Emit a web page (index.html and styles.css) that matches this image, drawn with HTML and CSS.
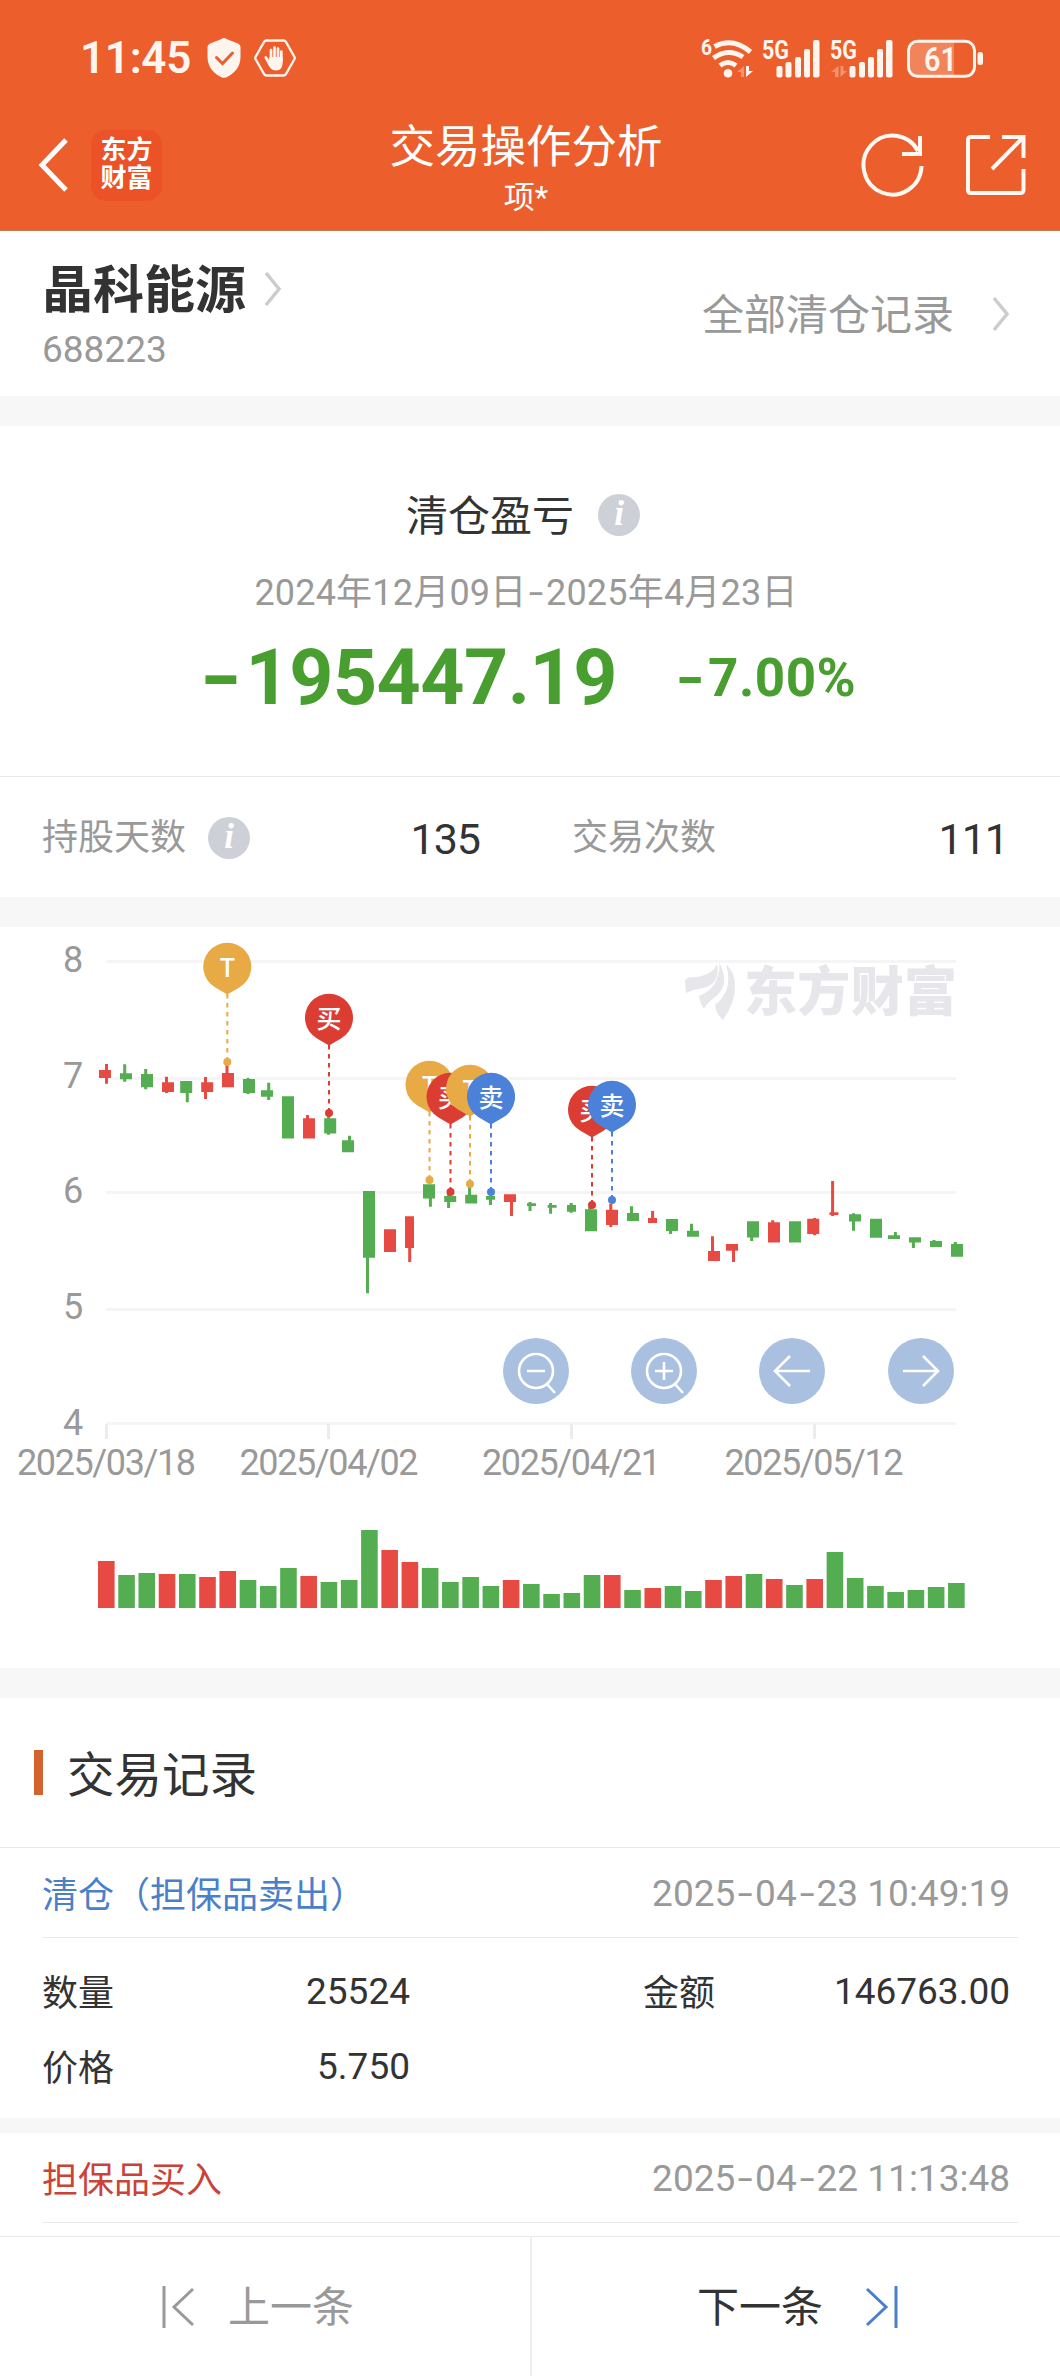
FILE: index.html
```
<!DOCTYPE html>
<html lang="zh-CN">
<head>
    <meta charset="utf-8">
    <title>交易操作分析</title>
    <link rel="stylesheet" href="styles.css">
</head>
<body>

    <header class="header">
        <div class="status-bar">
            <span class="time">11:45</span>
            <svg class="shield" width="34" height="40" viewBox="0 0 34 40">
                <path fill="#fff5ef" d="M17 0 Q18 0 20 1.200 L31 5.500 Q33.500 6.500 33.500 9 V19 C33.500 29 27 36 19 39.500 Q17 40.200 15 39.500 C7 36 .5 29 .5 19 V9 Q.5 6.500 3 5.500 L14 1.200 Q16 0 17 0Z"/>
                <path fill="none" stroke="#ec5e2b" stroke-width="3" stroke-linecap="round" d="M9.500 19.500 L15.500 25.500 L25.500 15"/>
            </svg>
            <svg class="hex" width="42" height="38" viewBox="0 0 42 38">
                <path fill="none" stroke="#fff5ef" stroke-width="2.400" stroke-linejoin="round" d="M12.500 1.500 H29.500 Q31 1.500 32 3 L40.500 18 Q41 19 40.500 20 L32 35 Q31 36.500 29.500 36.500 H12.500 Q11 36.500 10 35 L1.500 20 Q1 19 1.500 18 L10 3 Q11 1.500 12.500 1.500Z"/>
                <path fill="none" stroke="#fff5ef" stroke-width="2.700" stroke-linecap="round" d="M17 22 V11 M20.500 20 V8.500 M24 20 V9.500 M27.300 22 V12.500 M11.800 18.500 L16 26"/>
                <path fill="#fff5ef" d="M15.600 18 H28.700 V23 C28.700 28 26.500 31.500 22 31.500 C17 31.500 15 27.500 13.500 23Z"/>
            </svg>
            <svg class="signals" width="290" height="44" viewBox="696 35 290 44" fill="#fff5ef">
                <text x="701" y="54" font-size="22" font-weight="700" textLength="11" lengthAdjust="spacingAndGlyphs">6</text>
                <g fill="none" stroke="#fff5ef" stroke-width="5">
                    <path d="M714.500 45.500 Q733 36 750.500 51"/>
                    <path d="M713.500 57 Q728 46.500 743 56"/>
                    <path d="M720 64.500 Q728 58.500 736 64.500"/>
                </g>
                <circle cx="728" cy="72.300" r="4.300"/>
                <path d="M746 65 V76 L753 70 H749 V65Z"/>
                <path fill="#f4936e" d="M744 65 V76 H741 V71 H737Z"/>
                <text class="net" x="762" y="57.500" textLength="27" lengthAdjust="spacingAndGlyphs">5G</text>
                <text class="net" x="830" y="57.500" textLength="27" lengthAdjust="spacingAndGlyphs">5G</text>
                <rect x="776.500" y="65" width="6" height="11.500" rx="2"/>
                <rect x="785.500" y="61" width="6" height="15.500" rx="2"/>
                <rect x="795" y="56" width="6" height="20.500" rx="2"/>
                <rect x="804" y="48" width="6" height="28.500" rx="2"/>
                <rect x="813" y="39" width="6.500" height="37.500" rx="2"/>
                <rect x="849.500" y="65" width="6" height="11.500" rx="2"/>
                <rect x="859" y="61" width="6" height="15.500" rx="2"/>
                <rect x="868" y="56" width="6" height="20.500" rx="2"/>
                <rect x="877" y="48" width="6" height="28.500" rx="2"/>
                <rect x="886" y="39" width="6.500" height="37.500" rx="2"/>
                <path fill="#f4936e" d="M838.500 65 V76 H835 V71 H831Z M840.500 65 V76 L847 70 H843.500 V65Z"/>
                <path fill="#f1845a" d="M917 40 H954 V75 H917 Q909 75 909 67 V48 Q909 40 917 40Z"/>
                <rect x="908.500" y="40.300" width="66" height="35" rx="9" fill="none" stroke="#fff5ef" stroke-width="3"/>
                <rect x="977.500" y="51" width="5.500" height="13" rx="2.500"/>
                <text x="924" y="69.500" font-size="33" font-weight="600" textLength="33" lengthAdjust="spacingAndGlyphs">61</text>
            </svg>
        </div>
        <div class="nav-bar">
            <svg class="back" width="32" height="56" viewBox="0 0 32 56">
                <path fill="none" stroke="#fff" stroke-width="5" d="M29 3 L5 28 L29 53"/>
            </svg>
            <div class="app-logo">东方<br>财富</div>
            <div class="nav-title">
                <h1>交易操作分析</h1>
                <p>项*</p>
            </div>
            <svg class="refresh" width="64" height="64" viewBox="0 0 64 64" fill="none" stroke="#fff8f3" stroke-width="4">
                <path d="M60.500 33 A29 29.500 0 1 1 57 18"/>
                <path d="M59 3 V21 H41"/>
            </svg>
            <svg class="share" width="62" height="62" viewBox="0 0 62 62" fill="none" stroke="#fff8f3" stroke-width="4">
                <path d="M25 3 H6 Q3 3 3 6 V56 Q3 59 6 59 H55 Q58.500 59 58.500 56 V35"/>
                <path d="M37 3 H58.500 V24 M58 3.500 L27 35"/>
            </svg>
        </div>
    </header>

    <section class="stock">
        <div>
            <div class="stock-name"><span>晶科能源</span>
                <svg width="18" height="36" viewBox="0 0 18 36"><path fill="none" stroke="#ccc" stroke-width="3.500" d="M2 2 L15 18 L2 34"/></svg>
            </div>
            <div class="stock-code">688223</div>
        </div>
        <a class="all-records"><span>全部清仓记录</span>
            <svg width="18" height="36" viewBox="0 0 18 36"><path fill="none" stroke="#ccc" stroke-width="3.500" d="M2 2 L15 18 L2 34"/></svg>
        </a>
    </section>

    <section class="profit">
        <div class="profit-title"><span>清仓盈亏</span><i class="info">i</i></div>
        <div class="profit-date">2024年12月09日<b>-</b>2025年4月23日</div>
        <div class="profit-value">
            <span class="amount"><b>-</b>195447.19</span>
            <span class="percent"><b>-</b>7.00%</span>
        </div>
    </section>

    <section class="stats">
        <div class="stat"><span>持股天数</span><i class="info">i</i><strong>135</strong></div>
        <div class="stat"><span>交易次数</span><strong>111</strong></div>
    </section>

    <section class="chart">
        <svg id="chart" width="1060" height="741" viewBox="0 927 1060 741">
            <g stroke="#f5f5f5" stroke-width="3">
                <path d="M106 961.500 H956 M106 1078.500 H956 M106 1192.500 H956 M106 1309.500 H956 M106 1423.500 H956"/>
                <path stroke="#ececec" d="M106.500 1424 V1439 M328.500 1424 V1439 M571.500 1424 V1439 M814.500 1424 V1439"/>
            </g>
            <g class="axis">
                <text x="63" y="972">8</text>
                <text x="63" y="1088">7</text>
                <text x="63" y="1203">6</text>
                <text x="63" y="1319">5</text>
                <text x="63" y="1435">4</text>
                <text x="17" y="1474.500" textLength="179">2025/03/18</text>
                <text x="239.500" y="1474.500" textLength="179">2025/04/02</text>
                <text x="482" y="1474.500" textLength="179">2025/04/21</text>
                <text x="724.500" y="1474.500" textLength="179">2025/05/12</text>
            </g>
            <g fill="#e6e6eb">
                <path d="M685 981 Q686 978 689 977.500 Q712 977 717 964 Q721 984 703 988 Q694 989 686 993Z"/>
                <path d="M719.500 963 Q731 985 714 998 Q707 1003 704 1009 Q700 1003 699 996 Q720 988 719.500 963Z"/>
                <path d="M726 964 Q735 972 735 986 Q735 1003 723 1020 Q716 1014 715 1005 Q734 990 726 964Z"/>
                <text class="watermark" x="744" y="1011" textLength="213">东方财富</text>
            </g>
            <g id="candles"></g>
            <g id="pins"></g>
            <g id="volumes"></g>
            <g fill="#a9c0e1">
                <circle cx="536" cy="1371" r="33"/>
                <circle cx="664" cy="1371" r="33"/>
                <circle cx="792" cy="1371" r="33"/>
                <circle cx="921" cy="1371" r="33"/>
            </g>
            <g fill="none" stroke="#fff" stroke-width="2.600">
                <circle cx="536" cy="1371" r="17"/>
                <path d="M527 1371 H545 M547 1384 L555 1393"/>
                <circle cx="664" cy="1371" r="17"/>
                <path d="M655 1371 H673 M664 1362 V1380 M675 1384 L683 1393"/>
                <path d="M810 1371 H775 M790 1356 L775 1371 L790 1386"/>
                <path d="M903 1371 H938 M923 1356 L938 1371 L923 1386"/>
            </g>
        </svg>
    </section>

    <section class="records">
        <h2>交易记录</h2>
        <div class="record">
            <div class="record-head"><span class="sell">清仓（担保品卖出）</span><time>2025<b>-</b>04<b>-</b>23 10:49:19</time></div>
            <div class="record-body">
                <span>数量</span><span class="num">25524</span>
                <span class="second">金额</span><span class="num">146763.00</span>
                <span>价格</span><span class="num">5.750</span>
            </div>
        </div>
        <div class="record">
            <div class="record-head"><span class="buy">担保品买入</span><time>2025<b>-</b>04<b>-</b>22 11:13:48</time></div>
        </div>
    </section>

    <footer class="pager">
        <div class="prev">
            <svg width="34" height="42" viewBox="0 0 34 42"><path fill="none" stroke="#999" stroke-width="3" d="M2 0 V42 M31 3 L12 21 L31 39"/></svg>
            <span>上一条</span>
        </div>
        <div class="next">
            <span>下一条</span>
            <svg width="34" height="42" viewBox="0 0 34 42"><path fill="none" stroke="#4a7fc9" stroke-width="3" d="M31 0 V42 M2 3 L21 21 L2 39"/></svg>
        </div>
    </footer>

    <script>
        const colors = { r: "#e64a42", g: "#54ad51" };

        // color, x, width, top, height, wick x, wick top, wick bottom
        const candles = [
            ["r", 99, 12, 1070, 8, 106.5, 1064, 1083.7],
            ["g", 120, 12, 1073.3, 6, 124.7, 1064.3, 1081.7],
            ["g", 141, 12, 1074, 13.3, 145.7, 1069, 1089.3],
            ["r", 162, 12, 1082.3, 9.7, 166.5, 1076.7, 1093],
            ["g", 180.2, 12, 1081, 12, 187.3, 1081, 1102.3],
            ["r", 201.2, 12, 1082.3, 9.7, 205.5, 1077, 1099],
            ["r", 222, 12, 1073, 14.3, 227, 1064, 1087],
            ["g", 243, 12, 1079, 14, 248, 1078, 1094],
            ["g", 261, 12, 1090.3, 6.5, 268.7, 1082.7, 1100],
            ["g", 282, 12, 1096.3, 42.3, 288, 1096.3, 1138],
            ["r", 303, 12, 1118.3, 20.3, 307.5, 1115, 1138],
            ["g", 324.2, 12, 1118.3, 15.3, 328.6, 1113, 1134.7],
            ["g", 342, 12, 1140.3, 12, 349.5, 1135.7, 1152],
            ["g", 363, 12, 1191, 66.7, 367.5, 1191, 1293.3],
            ["r", 384, 12, 1229.3, 22.7, 390, 1230, 1252],
            ["r", 405, 9, 1216.3, 31.7, 409.7, 1216.3, 1262],
            ["g", 423, 12, 1184.3, 14.3, 430.4, 1184.3, 1206.7],
            ["g", 444.2, 12, 1196, 6, 448.6, 1190, 1208],
            ["g", 465.2, 12, 1194.7, 8.7, 469.6, 1187, 1203],
            ["g", 486, 9, 1196, 3.7, 490.5, 1196, 1205],
            ["r", 504, 12, 1194.3, 7.7, 511.5, 1194.3, 1216],
            ["g", 527, 9, 1203.3, 2.7, 530, 1202, 1211],
            ["g", 547.6, 9, 1205, 2.7, 550.6, 1203, 1213.7],
            ["g", 567, 9, 1205, 6.7, 571.2, 1203, 1212.7],
            ["g", 585, 12, 1209.3, 22, 589.7, 1207, 1231],
            ["r", 606, 12, 1209.7, 15.3, 610.8, 1204, 1227],
            ["g", 627, 12, 1213, 8, 631.5, 1206.3, 1221],
            ["r", 648, 9, 1218, 5, 652.6, 1211, 1223],
            ["g", 666, 12, 1219, 12, 670.6, 1219, 1234],
            ["g", 687, 12, 1230.7, 6, 691.5, 1223.7, 1236],
            ["r", 708, 12, 1251, 10, 712.5, 1236.3, 1261],
            ["r", 726, 12, 1244, 6.7, 733.5, 1244, 1262],
            ["g", 747, 12, 1221.3, 16.3, 751.7, 1221.3, 1241],
            ["r", 768, 12, 1222.3, 20.3, 772.7, 1220.3, 1242],
            ["g", 789, 12, 1221.3, 21.3, 795, 1222, 1242],
            ["r", 807.2, 12, 1218.7, 15.3, 814.6, 1218, 1235.3],
            ["r", 829.5, 9, 1212.3, 2.7, 832.6, 1181, 1216],
            ["g", 849, 12, 1214.3, 7.3, 853.5, 1213.3, 1230.7],
            ["g", 870, 12, 1218.7, 19, 876, 1219, 1237],
            ["g", 888, 12, 1235.3, 3.7, 895.4, 1232, 1239],
            ["g", 909, 12, 1237.3, 5.3, 913.4, 1237.3, 1248],
            ["g", 930, 12, 1241, 6, 934, 1240, 1247],
            ["g", 951, 12, 1244, 12.7, 955.3, 1242, 1256]
        ];
        document.getElementById("candles").innerHTML = candles.map(([c, x, w, y, h, wx, top, bottom]) =>
            `<path fill="${colors[c]}" d="M${x} ${y} h${w} v${h} h${-w}Z M${wx - 1.5} ${top} h3 V${bottom} h-3Z"/>`
        ).join("");

        // label, color, x, center of the bubble
        const pins = [
            ["T", "#e8aa45", 227.3, 967],
            ["买", "#dc3d33", 329, 1018],
            ["T", "#e8aa45", 429.5, 1085],
            ["买", "#dc3d33", 450.5, 1097],
            ["T", "#e8aa45", 470, 1089],
            ["卖", "#4b81d8", 491, 1097],
            ["买", "#dc3d33", 592, 1110],
            ["卖", "#4b81d8", 612, 1105]
        ];
        document.getElementById("pins").innerHTML = pins.map(([label, color, x, y]) =>
            `<g fill="${color}">
                <path stroke="${color}" stroke-width="2" stroke-dasharray="4.500 4.500" d="M${x} ${y + 27} V${y + 92}"/>
                <circle cx="${x}" cy="${y + 95}" r="4"/>
                <path d="M${x} ${y + 27.5} L${x - 12} ${y + 20.5} A24 24 0 1 1 ${x + 12} ${y + 20.5}Z"/>
                <text class="pin" x="${x}" y="${y + 9.5}">${label}</text>
            </g>`
        ).join("");

        const volumes = [
            "r47", "g33", "g35", "r34", "g34", "r31", "r37", "g28", "g22", "g40", "r32", "g26", "g28", "g78", "r58",
            "r46", "g40", "g26", "g31", "g22", "r28", "g24", "g14", "g15", "g33", "r33", "g18", "r20", "g22", "g17",
            "r28", "r32", "g34", "r29", "g23", "r29", "g56", "g30", "g22", "g16", "g18", "g21", "g25"
        ];
        document.getElementById("volumes").innerHTML = volumes.map((v, i) => {
            const h = Number(v.slice(1));
            return `<rect fill="${colors[v[0]]}" x="${98 + i * 20.24}" y="${1608 - h}" width="16.600" height="${h}"/>`;
        }).join("");
    </script>
</body>
</html>
```
FILE: styles.css
```
* {
    box-sizing: border-box;
    margin: 0;
    padding: 0;
}

body {
    width: 1060px;
    height: 2376px;
    overflow: hidden;
    background: #f7f7f7;
    color: #333;
    font-family: Roboto, "Noto Sans CJK SC", sans-serif;
    font-size: 36px;
}

svg {
    display: block;
    flex: none;
}

section {
    background: #fff;
}

/* wide hyphen, as in DIN figures */
b {
    display: inline-block;
    font-weight: inherit;
    transform: scaleX(1.45);
    margin: 0 .13em;
}

.header {
    height: 231px;
    background: #ec5e2b;
    color: #fff;
    border-bottom: 1px solid #c47a58;
}

.status-bar {
    display: flex;
    align-items: center;
    height: 116px;
    padding: 0 74px 0 80px;
}

.time {
    width: 127px;
    font-size: 44px;
    font-weight: 600;
    letter-spacing: -.3px;
    color: #fff5ef;
}

.hex {
    margin-left: 13px;
}

.signals {
    margin-left: auto;
}

.net {
    font-size: 25px;
    font-weight: 700;
}

.nav-bar {
    display: flex;
    align-items: center;
    height: 98px;
    padding: 0 33px 0 37px;
}

.app-logo {
    width: 71px;
    height: 71px;
    margin-left: 22px;
    padding-top: 6px;
    border-radius: 15px;
    background: #eb5228;
    font-size: 26px;
    font-weight: 700;
    line-height: 28px;
    text-align: center;
}

.nav-title {
    flex: 1;
    padding: 5px 1px 0 30px;
    text-align: center;
}

.nav-title h1 {
    font-size: 45.5px;
    font-weight: 400;
    line-height: 60px;
}

.nav-title p {
    font-size: 31px;
    line-height: 40px;
}

.share {
    margin-left: 40px;
}

.stock {
    display: flex;
    justify-content: space-between;
    height: 165px;
    padding: 31px 50px 0 42px;
}

.stock-name {
    display: flex;
    align-items: center;
    gap: 18px;
    height: 54px;
    font-size: 51px;
    font-weight: 700;
}

.stock-name span,
.all-records span,
.profit-title span,
.pager span {
    padding-bottom: 6px;
}

.stock-code {
    margin-top: 10px;
    font-size: 37px;
    line-height: 48px;
    color: #999;
}

.all-records {
    display: flex;
    align-items: center;
    gap: 38px;
    height: 104px;
    font-size: 42px;
    color: #999;
}

.profit {
    height: 351px;
    margin-top: 30px;
    padding-top: 61px;
    border-bottom: 1px solid #e9e9e9;
    text-align: center;
}

.profit-title {
    display: flex;
    justify-content: center;
    align-items: center;
    gap: 24px;
    height: 56px;
    padding-right: 14px;
    font-size: 42px;
}

.info {
    width: 42px;
    height: 42px;
    border-radius: 50%;
    background: #cdd1d7;
    color: #fff;
    font: italic 700 35px/40px "Liberation Serif", serif;
    text-align: center;
}

.profit-date {
    margin-top: 25px;
    padding-right: 8px;
    font-size: 36px;
    line-height: 50px;
    letter-spacing: .2px;
    color: #999;
}

.profit-value {
    display: flex;
    justify-content: center;
    align-items: center;
    gap: 56px;
    height: 90px;
    margin-top: 15px;
    padding-right: 8px;
    color: #489e2f;
    font-weight: 700;
}

.amount {
    font-size: 77px;
    letter-spacing: -.5px;
}

.percent {
    font-size: 53px;
    letter-spacing: .5px;
}

.stats {
    display: grid;
    grid-template-columns: 530px 530px;
    height: 120px;
}

.stat {
    display: flex;
    align-items: center;
    padding: 2px 50px 0 42px;
}

.stat span {
    margin-top: -8px;
    color: #999;
}

.stat .info {
    margin-left: 22px;
}

.stat strong {
    margin-left: auto;
    padding-top: 2px;
    font-size: 43px;
    font-weight: 400;
    letter-spacing: -1px;
}

.stat:last-child {
    padding-right: 52px;
}

.chart {
    height: 741px;
    margin-top: 30px;
}

.axis {
    font-size: 36px;
    fill: #999;
}

.watermark {
    font-size: 53px;
    font-weight: 900;
}

.pin {
    fill: #fff;
    font-size: 25px;
    font-weight: 500;
    text-anchor: middle;
}

.records {
    height: 538px;
    margin-top: 30px;
}

.records h2 {
    display: flex;
    align-items: center;
    height: 150px;
    padding: 0 0 3px 34px;
    border-bottom: 1px solid #e9e9e9;
    font-size: 47.5px;
    font-weight: 400;
}

.records h2::before {
    content: "";
    width: 9px;
    height: 45px;
    margin: 3px 24px 0 0;
    background: #d4622d;
}

.record + .record {
    border-top: 15px solid #f7f7f7;
}

.record-head {
    display: flex;
    justify-content: space-between;
    align-items: center;
    height: 90px;
    margin: 0 42px;
    padding-right: 8px;
    border-bottom: 1px solid #e9e9e9;
}

.record-head span {
    padding-bottom: 2px;
}

.record-head time {
    padding-top: 2px;
    font-size: 37px;
    color: #999;
}

.sell {
    color: #4a7fc9;
}

.buy {
    color: #cb4238;
}

.record-body {
    display: grid;
    grid-template-columns: 120px 248px 350px 250px;
    grid-auto-rows: 75px;
    align-items: center;
    height: 180px;
    padding: 14px 0 0 42px;
}

.record-body .num {
    padding-top: 3px;
    font-size: 37px;
    text-align: right;
}

.record-body .second {
    padding-left: 233px;
}

.pager {
    display: grid;
    grid-template-columns: 532px 528px;
    height: 140px;
    border-top: 1px solid #e9e9e9;
    background: #fff;
    font-size: 42px;
}

.pager div {
    display: flex;
    align-items: center;
}

.prev {
    gap: 32px;
    padding-left: 162px;
    border-right: 2px solid #eee;
    color: #999;
}

.next {
    gap: 42px;
    padding-left: 165px;
}
```
